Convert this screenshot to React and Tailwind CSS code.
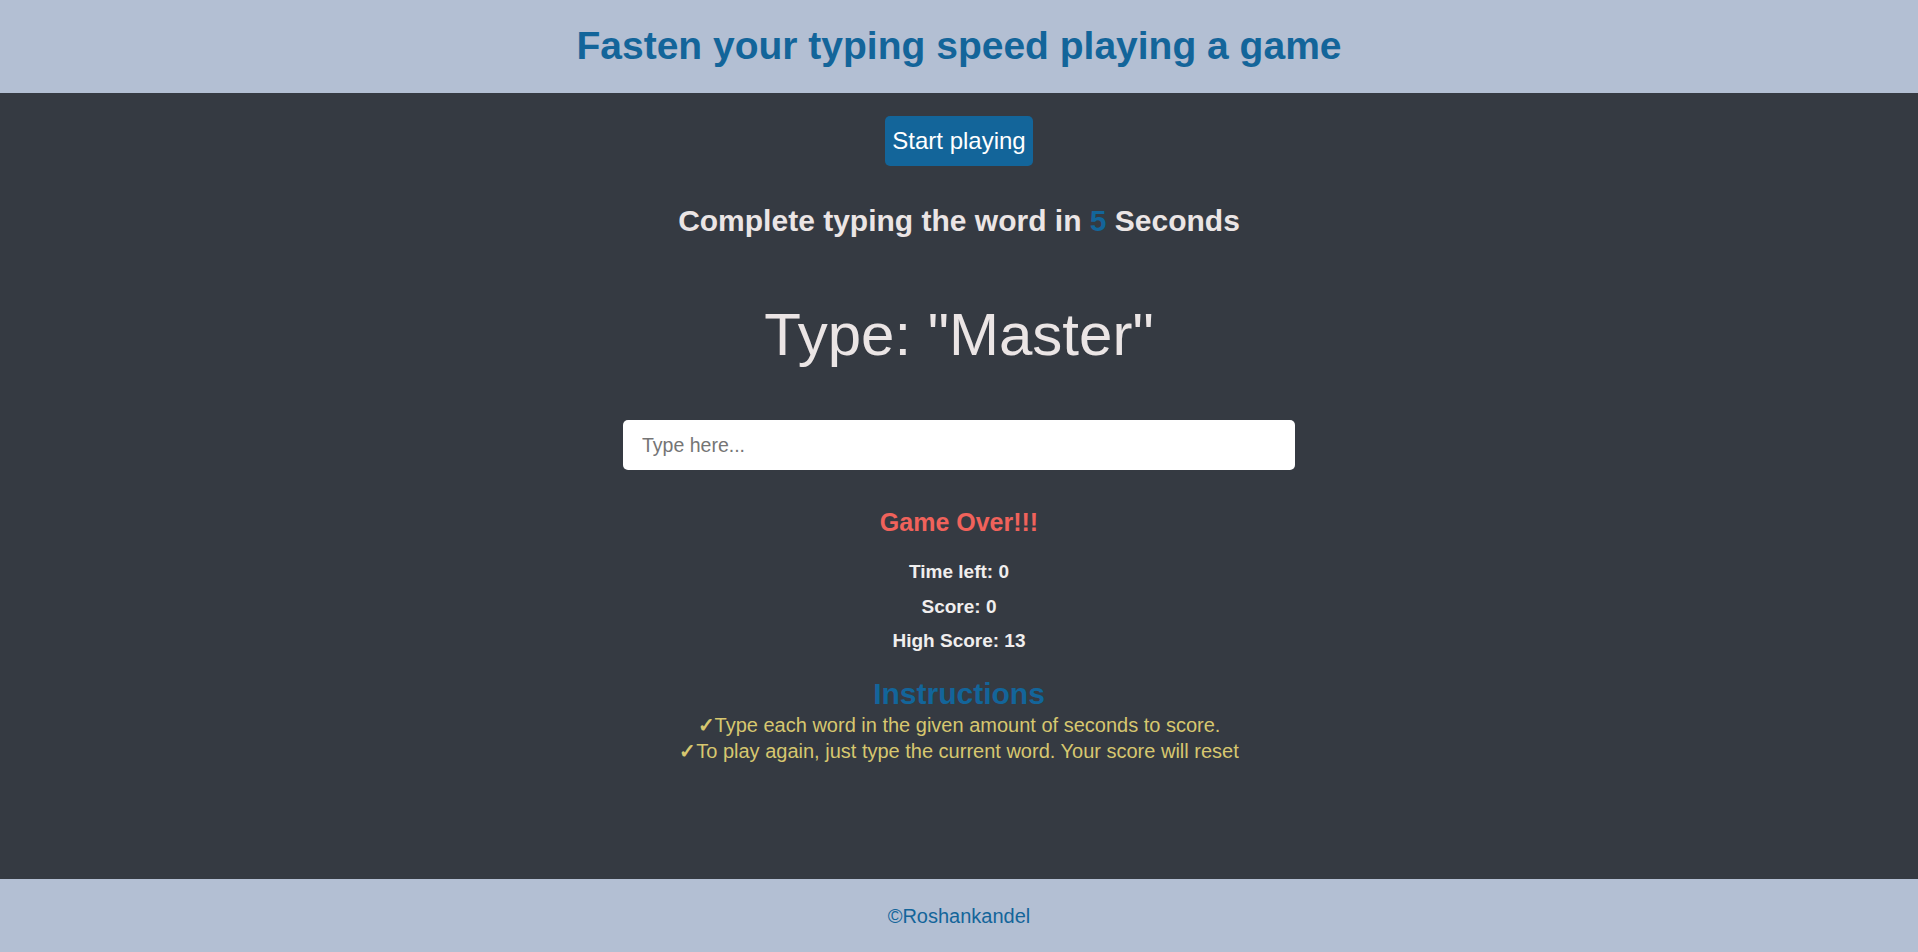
import { useState } from "react";

const font = "font-['Liberation_Sans',Arial,sans-serif]";

const App = () => {
  const [word, setWord] = useState("");

  return (
    <div className={`min-h-screen flex flex-col bg-[#353a42] ${font}`}>
      {/* Header */}
      <header className="h-[93px] bg-[#b3bfd3] flex items-center justify-center pb-[3px]">
        <h1 className="text-[39px] leading-none font-bold text-[#13659a]">
          Fasten your typing speed playing a game
        </h1>
      </header>

      {/* Game */}
      <main className="flex-1 flex flex-col items-center text-center">
        <button className="mt-[23px] h-[50px] px-[7px] rounded-[5px] bg-[#13659a] text-white text-[24px] leading-none">
          Start playing
        </button>

        <h2 className="mt-[40px] text-[30px] leading-none font-bold text-[#ebe5e5]">
          Complete typing the word in <span className="text-[#13659a]">5</span> Seconds
        </h2>

        <p className="mt-[69px] text-[60px] leading-none text-[#ebe5e5]">
          Type: "Master"
        </p>

        <input
          type="text"
          value={word}
          onChange={(e) => setWord(e.target.value)}
          placeholder="Type here..."
          className="mt-[55px] w-[672px] h-[50px] rounded-[5px] bg-white px-[19px] text-[19.5px] text-[#333] placeholder:text-[#757575] outline-none"
        />

        <h3 className="mt-[40px] text-[25px] leading-none font-bold text-[#f0625b]">
          Game Over!!!
        </h3>

        <div className="mt-[20px] text-[19px] leading-[34.5px] font-bold text-[#f0eeee]">
          <p>Time left: 0</p>
          <p>Score: 0</p>
          <p>High Score: 13</p>
        </div>

        <h2 className="mt-[20px] text-[30px] leading-none font-bold text-[#13659a]">
          Instructions
        </h2>
        <div className="mt-[3px] text-[20px] leading-[26.7px] text-[#d7c76f]">
          <p>
            <span className="font-bold">✓</span>Type each word in the given amount of seconds to score.
          </p>
          <p>
            <span className="font-bold">✓</span>To play again, just type the current word. Your score will reset
          </p>
        </div>
      </main>

      {/* Footer */}
      <footer className="h-[73px] bg-[#b3bfd3] flex items-center justify-center">
        <p className="text-[20px] leading-none text-[#13659a]">©Roshankandel</p>
      </footer>
    </div>
  );
};

export default App;
